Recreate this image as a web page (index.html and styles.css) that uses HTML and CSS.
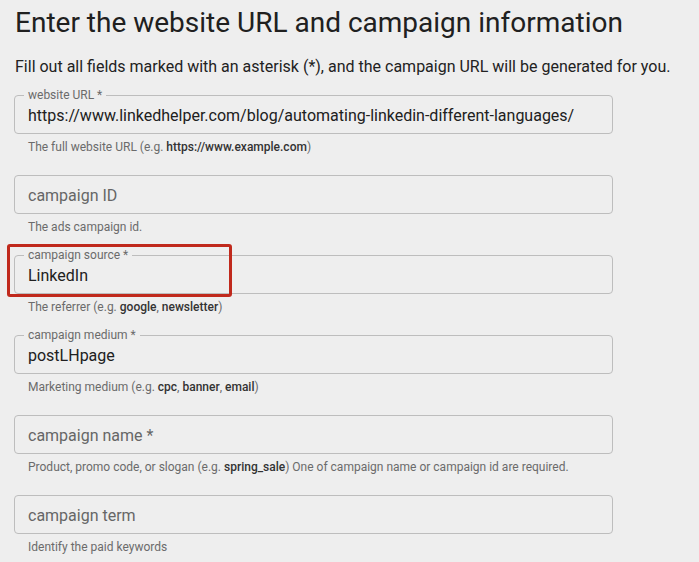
FILE: index.html
```html
<!DOCTYPE html>
<html lang="en">
<head>
<meta charset="utf-8">
<title>Campaign URL Builder</title>
<link rel="stylesheet" href="styles.css">
</head>
<body>
<main class="page">
  <h1 class="title">Enter the website URL and campaign information</h1>
  <p class="intro">Fill out all fields marked with an asterisk (*), and the campaign URL will be generated for you.</p>

  <div class="group">
    <div class="field">
      <span class="label">website URL *</span>
      <span class="value">https://www.linkedhelper.com/blog/automating-linkedin-different-languages/</span>
    </div>
    <div class="help">The full website URL (e.g. <b>https://www.example.com</b>)</div>
  </div>

  <div class="group">
    <div class="field">
      <span class="placeholder">campaign ID</span>
    </div>
    <div class="help">The ads campaign id.</div>
  </div>

  <div class="group">
    <div class="highlight"></div>
    <div class="field">
      <span class="label">campaign source *</span>
      <span class="value">LinkedIn</span>
    </div>
    <div class="help">The referrer (e.g. <b>google</b>, <b>newsletter</b>)</div>
  </div>

  <div class="group">
    <div class="field">
      <span class="label">campaign medium *</span>
      <span class="value">postLHpage</span>
    </div>
    <div class="help">Marketing medium (e.g. <b>cpc</b>, <b>banner</b>, <b>email</b>)</div>
  </div>

  <div class="group">
    <div class="field">
      <span class="placeholder">campaign name *</span>
    </div>
    <div class="help">Product, promo code, or slogan (e.g. <b>spring_sale</b>) One of campaign name or campaign id are required.</div>
  </div>

  <div class="group">
    <div class="field">
      <span class="placeholder">campaign term</span>
    </div>
    <div class="help">Identify the paid keywords</div>
  </div>
</main>
</body>
</html>
```

FILE: styles.css
```css
html, body {
  margin: 0;
  padding: 0;
  background: #eeeeee;
}

body {
  font-family: Roboto, "Liberation Sans", sans-serif;
  color: #212121;
  overflow: hidden;
}

.page {
  padding: 0 14px;
}

.title {
  margin: 0;
  font-size: 28px;
  font-weight: 400;
  line-height: 46px;
  color: #202020;
  padding-left: 1px;
  white-space: nowrap;
}

.intro {
  margin: 8.5px 0 16.5px;
  font-size: 16px;
  line-height: 24px;
  color: #222;
  padding-left: 1px;
  white-space: nowrap;
}

.group {
  position: relative;
  margin-bottom: 21px;
}

.field {
  position: relative;
  box-sizing: border-box;
  width: 599px;
  height: 39px;
  border: 1px solid #bdbdbd;
  border-radius: 4px;
  padding: 1px 13px 0;
  display: flex;
  align-items: center;
  font-size: 16px;
}

.value {
  color: #202020;
  white-space: nowrap;
  padding-top: 1px;
}

.placeholder {
  color: #666;
  white-space: nowrap;
}

.label {
  position: absolute;
  top: -8px;
  left: 9px;
  padding: 0 4px;
  background: #eeeeee;
  font-size: 12px;
  line-height: 14px;
  color: #6b6b6b;
}

.help {
  margin-top: 6px;
  padding-left: 14px;
  font-size: 12px;
  line-height: 14px;
  color: #6b6b6b;
  white-space: nowrap;
}

.help b {
  font-weight: 500;
  color: #333;
}

.highlight {
  position: absolute;
  left: -7px;
  top: -11px;
  width: 225px;
  height: 53px;
  box-sizing: border-box;
  border: 3px solid #c0291c;
  border-radius: 3px;
  z-index: 2;
}
```
